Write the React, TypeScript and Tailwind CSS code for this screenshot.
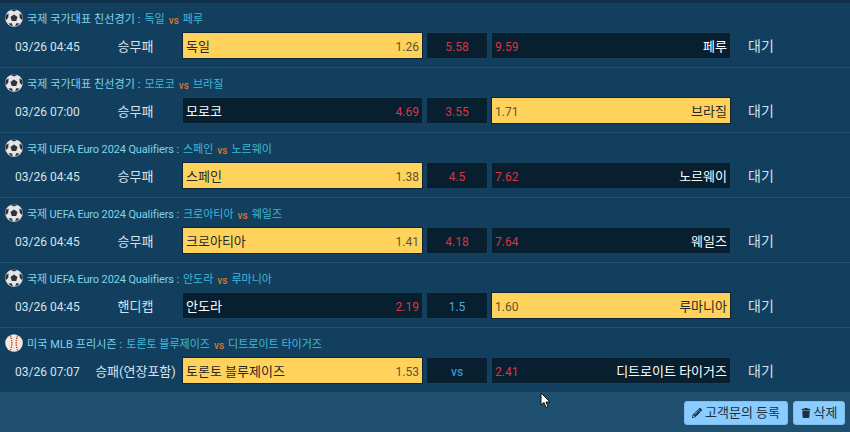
import { FaPencilAlt, FaTrash } from 'react-icons/fa'

type Game = {
  league: string
  home: string
  away: string
  time: string
  kind: string
  homeOdd: string
  midOdd: string
  awayOdd: string
  pick: 'home' | 'away'
  sport?: 'soccer' | 'baseball'
}

const GAMES: Game[] = [
  { league: '국제 국가대표 친선경기', home: '독일', away: '페루', time: '03/26 04:45', kind: '승무패', homeOdd: '1.26', midOdd: '5.58', awayOdd: '9.59', pick: 'home' },
  { league: '국제 국가대표 친선경기', home: '모로코', away: '브라질', time: '03/26 07:00', kind: '승무패', homeOdd: '4.69', midOdd: '3.55', awayOdd: '1.71', pick: 'away' },
  { league: '국제 UEFA Euro 2024 Qualifiers', home: '스페인', away: '노르웨이', time: '03/26 04:45', kind: '승무패', homeOdd: '1.38', midOdd: '4.5', awayOdd: '7.62', pick: 'home' },
  { league: '국제 UEFA Euro 2024 Qualifiers', home: '크로아티아', away: '웨일즈', time: '03/26 04:45', kind: '승무패', homeOdd: '1.41', midOdd: '4.18', awayOdd: '7.64', pick: 'home' },
  { league: '국제 UEFA Euro 2024 Qualifiers', home: '안도라', away: '루마니아', time: '03/26 04:45', kind: '핸디캡', homeOdd: '2.19', midOdd: '1.5', awayOdd: '1.60', pick: 'away' },
  { league: '미국 MLB 프리시즌', home: '토론토 블루제이즈', away: '디트로이트 타이거즈', time: '03/26 07:07', kind: '승패(연장포함)', homeOdd: '1.53', midOdd: 'vs', awayOdd: '2.41', pick: 'home', sport: 'baseball' },
]

function SoccerIcon() {
  return (
    <svg width="18" height="18" viewBox="0 0 18 18" className="mb-[5px] shrink-0">
      <circle cx="9" cy="9" r="8.8" fill="#e3e5e8" />
      <path d="M9 5.4 12.5 7.9 11.2 12H6.8L5.5 7.9Z" fill="#2f3236" />
      <path d="M5.8 1 9 2.6 12.2 1 9.6 0.2H8.4Z" fill="#2f3236" />
      <path d="M0.8 6 3.6 4.4 3.2 8.8 1.2 11 0.3 9Z" fill="#2f3236" />
      <path d="M17.2 6 14.4 4.4 14.8 8.8 16.8 11 17.7 9Z" fill="#2f3236" />
      <path d="M3.4 14.6 6.8 14.2 7.8 17 5.4 16.6Z" fill="#2f3236" />
      <path d="M14.6 14.6 11.2 14.2 10.2 17 12.6 16.6Z" fill="#2f3236" />
    </svg>
  )
}

function BaseballIcon() {
  return (
    <svg width="18" height="18" viewBox="0 0 18 18" className="mb-[5px] shrink-0">
      <circle cx="9" cy="9" r="8.8" fill="#f3e9dc" />
      <path d="M5.2 1.4C7.4 6 7.4 12 5.2 16.6" fill="none" stroke="#b0452f" strokeWidth="1.3" strokeDasharray="1.4 0.9" />
      <path d="M12.8 1.4C10.6 6 10.6 12 12.8 16.6" fill="none" stroke="#b0452f" strokeWidth="1.3" strokeDasharray="1.4 0.9" />
    </svg>
  )
}

function GameRow({ game }: { game: Game }) {
  const homePicked = game.pick === 'home'
  const awayPicked = game.pick === 'away'
  const midIsVs = game.midOdd === 'vs'
  const isUefa = game.league.includes('UEFA')

  return (
    <div className="h-[65px] border-b border-[#22506f] bg-[#133f5f] last:border-b-0">
      <div className="flex h-[29px] items-center gap-1 pl-[5px] pt-[5px] text-[11px]">
        {game.sport === 'baseball' ? <BaseballIcon /> : <SoccerIcon />}
        <span className={`text-[#7fd3ea] ${isUefa ? 'tracking-[-0.13px]' : 'tracking-[0.1px]'}`}>{game.league} :</span>
        <span className="text-[#3fb8d8]">{game.home}</span>
        <span className="text-[10px] font-medium text-[#d9772b]">vs</span>
        <span className="text-[#3fb8d8]">{game.away}</span>
      </div>
      <div className="flex h-[27px] items-stretch">
        <div className="flex w-[97px] items-center justify-end pt-[3px] text-[12px] text-[#d5e3ec]">
          <span className="w-[82px]">{game.time}</span>
        </div>
        <div className="flex w-[85px] items-center justify-center whitespace-nowrap pr-[8px] pt-[3px] text-[13px] text-[#d5e3ec]">
          {game.kind}
        </div>
        <div
          className={`flex w-[241px] items-center justify-between border px-[3px] pt-[2px] ${
            homePicked ? 'border-[#0b2436] bg-[#ffd25c]' : 'border-[#17405c] bg-[#071f2f]'
          }`}
        >
          <span className={`text-[13px] ${homePicked ? 'text-[#26292b]' : 'text-white'}`}>{game.home}</span>
          <span className={`text-[12px] ${homePicked ? 'text-[#5d5532]' : 'text-[#dc3545]'}`}>{game.homeOdd}</span>
        </div>
        <div
          className={`ml-[3px] flex w-[62px] items-center justify-center border border-[#17405c] bg-[#071f2f] pt-[2px] text-[12px] ${
            midIsVs ? 'font-medium text-[#3b94c9]' : game.midOdd === '1.5' ? 'text-[#4fa8dc]' : 'text-[#dc3545]'
          }`}
        >
          {game.midOdd}
        </div>
        <div
          className={`ml-[3px] flex w-[240px] items-center justify-between border px-[3px] pt-[2px] ${
            awayPicked ? 'border-[#0b2436] bg-[#ffd25c]' : 'border-[#17405c] bg-[#071f2f]'
          }`}
        >
          <span className={`text-[12px] ${awayPicked ? 'text-[#5d5532]' : 'text-[#dc3545]'}`}>{game.awayOdd}</span>
          <span className={`text-[13px] ${awayPicked ? 'text-[#26292b]' : 'text-white'}`}>{game.away}</span>
        </div>
        <div className="ml-[17px] flex items-center pt-[1px] text-[14px] text-[#d5e3ec]">대기</div>
      </div>
    </div>
  )
}

export default function App() {
  return (
    <div className="relative flex h-[432px] w-[850px] flex-col overflow-hidden bg-[#20506f] font-['Roboto','Noto_Sans_CJK_KR',sans-serif]">
      <div className="h-[3px] bg-[#0f3048]" />
      {GAMES.map((game) => (
        <GameRow key={game.home} game={game} />
      ))}
      <div className="flex justify-end gap-[5px] pr-[5px] pt-[8px]">
        <button className="flex h-[24px] w-[104px] items-center justify-center gap-[3px] rounded-[3px] border border-[#7ebde9] bg-[#8accff] text-[13px] text-[#1f2f3d]">
          <FaPencilAlt size={10} />
          고객문의 등록
        </button>
        <button className="flex h-[24px] w-[52px] items-center justify-center gap-[3px] rounded-[3px] border border-[#7ebde9] bg-[#8accff] text-[13px] text-[#1f2f3d]">
          <FaTrash size={10} />
          삭제
        </button>
      </div>
      {/* mouse cursor caught in the screenshot */}
      <svg width="12" height="17" viewBox="0 0 12 17" className="absolute left-[540px] top-[392px]">
        <path d="M1 1V13L4 10.5 6 15.5 8 14.6 6 10H10Z" fill="#fff" stroke="#111" strokeWidth="1" />
      </svg>
    </div>
  )
}
